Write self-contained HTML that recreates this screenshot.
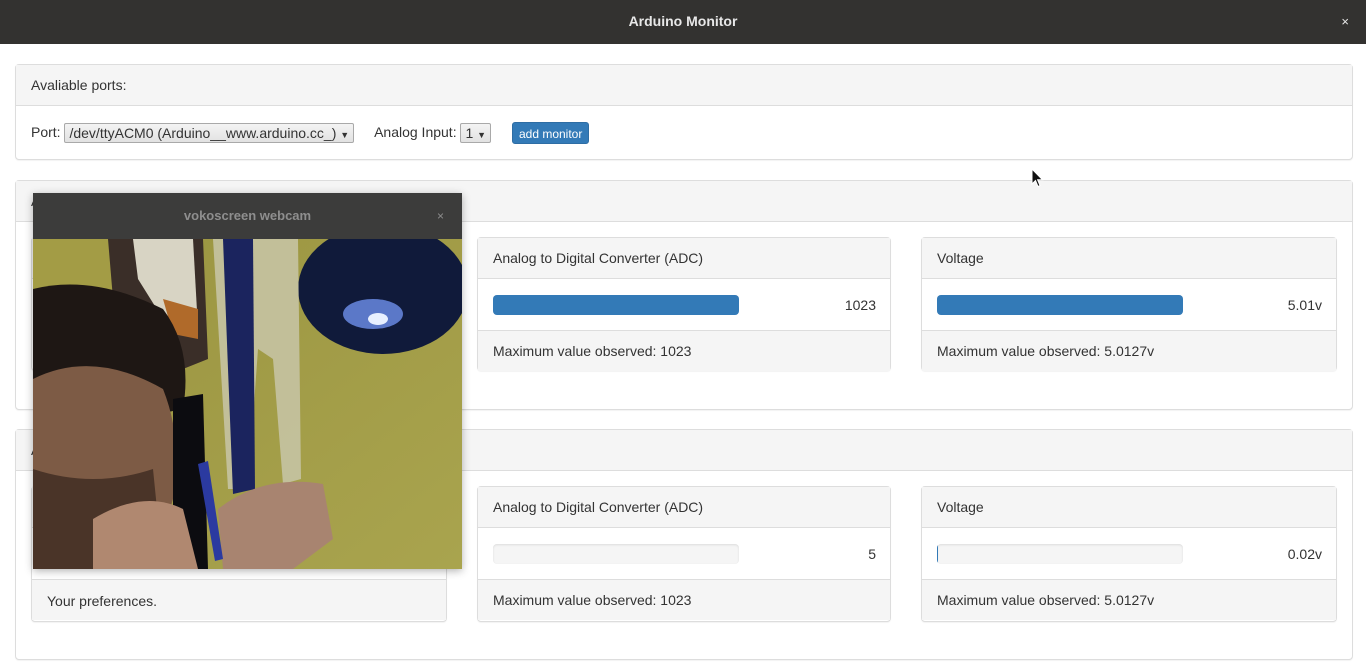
<!DOCTYPE html>
<html><head><style>
*{box-sizing:border-box;margin:0;padding:0}
body{width:1366px;height:672px;background:#fff;font-family:"Liberation Sans",sans-serif;font-size:14px;color:#333;position:relative;overflow:hidden}
.abs{position:absolute}
.tb{left:0;top:0;width:1366px;height:44px;background:#333230;color:#e8e8e8;font-weight:bold;font-size:14px;text-align:center;line-height:43px}
.panel{position:absolute;left:15px;width:1338px;border:1px solid #ddd;border-radius:4px;background:#fff;box-shadow:0 1px 1px rgba(0,0,0,.05)}
.ph{height:41px;background:#f5f5f5;border-bottom:1px solid #ddd;padding:0 15px;line-height:40px}
.card{position:absolute;border:1px solid #ddd;border-radius:4px;background:#fff;box-shadow:0 1px 1px rgba(0,0,0,.05)}
.card .h{height:41px;background:#f5f5f5;border-bottom:1px solid #ddd;padding:0 15px;line-height:40px}
.card .b{height:52px;position:relative;border-bottom:1px solid #ddd}
.card .f{height:40px;background:#f5f5f5;padding:0 15px;line-height:40px}
.bar{position:absolute;left:15px;top:16px;width:246px;height:20px;border-radius:4px;background:#f5f5f5;box-shadow:inset 0 1px 2px rgba(0,0,0,.1);overflow:hidden}
.fill{height:100%;background:#337ab7}
.val{position:absolute;right:14px;top:0;line-height:52px}
select{font-family:"Liberation Sans",sans-serif}
.sel{display:inline-block;border:1px solid #a9a9a9;background:linear-gradient(#f4f4f4,#e2e2e2);height:20px;line-height:18px;padding:0 4px;border-radius:2px;font-size:14px;vertical-align:middle}
</style></head><body>
<div class="abs tb">Arduino Monitor<span style="position:absolute;right:17px;top:0;font-weight:normal;font-size:13px">×</span></div>

<div class="panel" style="top:64px;height:96px">
 <div class="ph">Avaliable ports:</div>
 <div style="padding:0 15px;line-height:52px;height:52px">Port: <span class="sel">/dev/ttyACM0 (Arduino__www.arduino.cc_) <span style="font-size:9px">▼</span></span>
 <span style="margin-left:16px">Analog Input:</span> <span class="sel">1 <span style="font-size:9px">▼</span></span>
 <span style="display:inline-block;margin-left:17px;background:#337ab7;color:#fff;font-size:12px;height:22px;line-height:22px;padding:0 6px;border-radius:3px;border:1px solid #2e6da4;vertical-align:middle">add monitor</span></div>
</div>

<div class="panel" style="top:180px;height:230px"><div class="ph">A</div></div>
<div class="panel" style="top:429px;height:231px"><div class="ph">A</div></div>

<!-- row 1 cards -->
<div class="card" style="left:31px;top:237px;width:416px;height:134px"><div class="h"></div></div>
<div class="card" style="left:477px;top:237px;width:414px;height:134px"><div class="h">Analog to Digital Converter (ADC)</div><div class="b"><div class="bar"><div class="fill" style="width:100%"></div></div><div class="val">1023</div></div><div class="f">Maximum value observed: 1023</div></div>
<div class="card" style="left:921px;top:237px;width:416px;height:134px"><div class="h">Voltage</div><div class="b"><div class="bar"><div class="fill" style="width:100%"></div></div><div class="val">5.01v</div></div><div class="f">Maximum value observed: 5.0127v</div></div>

<!-- row 2 cards -->
<div class="card" style="left:31px;top:486px;width:416px;height:136px"><div class="h"></div><div class="b"></div><div class="f" style="line-height:42px">Your preferences.</div></div>
<div class="card" style="left:477px;top:486px;width:414px;height:136px"><div class="h">Analog to Digital Converter (ADC)</div><div class="b"><div class="bar"></div><div class="val">5</div></div><div class="f">Maximum value observed: 1023</div></div>
<div class="card" style="left:921px;top:486px;width:416px;height:136px"><div class="h">Voltage</div><div class="b"><div class="bar"><div class="fill" style="width:1px"></div></div><div class="val">0.02v</div></div><div class="f">Maximum value observed: 5.0127v</div></div>

<!-- webcam -->
<div class="abs" style="left:33px;top:193px;width:429px;height:376px;box-shadow:0 2px 8px rgba(0,0,0,.3)">
 <div style="height:46px;background:#3c3c3b;color:#8e8e8e;font-weight:bold;font-size:13px;text-align:center;line-height:46px;position:relative">vokoscreen webcam<span style="position:absolute;right:18px;font-weight:normal;font-size:12px">×</span></div>
 <svg width="429" height="330" viewBox="0 0 429 330" style="display:block">
  <defs><linearGradient id="bg" x1="0" y1="0" x2="1" y2="1"><stop offset="0" stop-color="#9a9440"/><stop offset="1" stop-color="#a9a44e"/></linearGradient></defs>
  <rect width="429" height="330" fill="url(#bg)"/>
  <rect x="0" y="0" width="80" height="70" fill="#a39c45"/>
  <path d="M75 0 L170 0 L175 120 L150 130 L110 95 L80 60Z" fill="#3a2e28"/>
  <path d="M100 0 L160 0 L165 90 L130 80 L105 40Z" fill="#d8d4c4"/>
  <path d="M130 60 L165 70 L165 100 L140 95Z" fill="#b06a2a"/>
  <ellipse cx="350" cy="50" rx="85" ry="65" fill="#101a3a"/>
  <ellipse cx="340" cy="75" rx="30" ry="15" fill="#5b78c8"/>
  <ellipse cx="345" cy="80" rx="10" ry="6" fill="#e8f0ff"/>
  <path d="M180 0 L265 0 L268 240 L250 245 L240 120 L225 110 L215 250 L195 250Z" fill="#c8c6a8" opacity=".85"/>
  <path d="M190 0 L220 0 L222 250 L200 255 L195 130Z" fill="#1b245e"/>
  <path d="M0 50 Q60 35 130 70 Q160 110 150 170 L0 200Z" fill="#1e1714"/>
  <path d="M0 140 Q60 110 130 150 Q150 200 140 260 L120 330 L0 330Z" fill="#7d5b45"/>
  <path d="M0 230 Q60 250 120 230 L130 330 L0 330Z" fill="#4a3428"/>
  <path d="M140 160 L170 155 L175 330 L140 330Z" fill="#0c0c10"/>
  <path d="M60 280 Q110 250 150 270 L165 330 L60 330Z" fill="#b08870"/>
  <path d="M185 270 Q230 235 290 245 L300 300 L260 330 L190 330Z" fill="#a88470"/>
  <path d="M165 225 L175 222 L190 320 L182 322Z" fill="#2b3aa0"/>
 </svg>
</div>

<svg class="abs" style="left:1031px;top:168px" width="14" height="20" viewBox="0 0 14 20"><path d="M1 1 L1 16 L4.5 12.5 L7 18.5 L9 17.6 L6.6 11.8 L11.5 11.8Z" fill="#111" stroke="#fff" stroke-width="1"/></svg>
</body></html>
